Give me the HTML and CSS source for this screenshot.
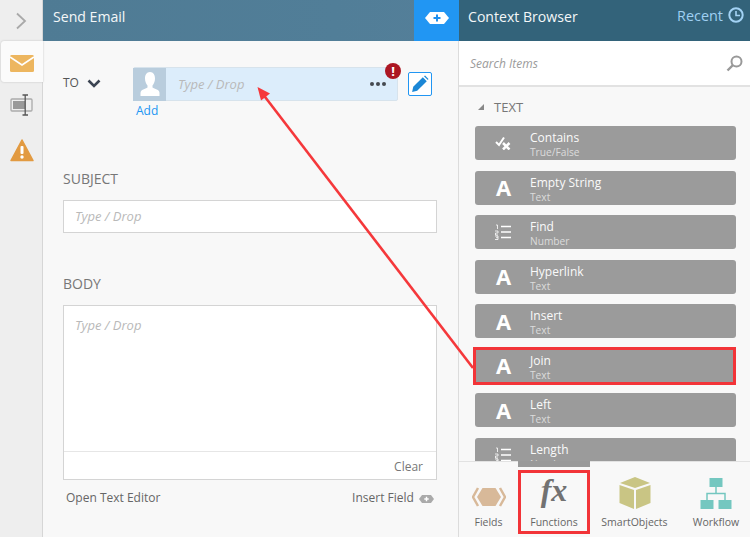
FILE: index.html
```html
<!DOCTYPE html>
<html>
<head>
<meta charset="utf-8">
<title>Send Email</title>
<link rel="stylesheet" href="styles.css">
</head>
<body>
<div class="app">
  <nav class="rail">
    <div class="rail-top"><svg width="12" height="18" viewBox="0 0 12 18"><path d="M2 1.500L10 9L2 16.500" fill="none" stroke="#a9a9a9" stroke-width="1.800"/></svg></div>
    <div class="rail-tab active"><svg width="24" height="17" viewBox="0 0 24 17"><rect width="24" height="17" rx="1.500" fill="#edb65f"/><path d="M0 2L12 10L24 2" fill="none" stroke="#fff" stroke-width="1.600"/></svg></div>
    <div class="rail-tab"><svg width="24" height="22" viewBox="0 0 24 22"><rect x="1" y="5" width="21" height="12" rx="1" fill="none" stroke="#aaa" stroke-width="1.300"/><rect x="3" y="7" width="12" height="8" fill="#999"/><path d="M12.500 1H18M12.500 21H18M15.200 1V21" stroke="#555" stroke-width="1.300" fill="none"/></svg></div>
    <div class="rail-tab"><svg width="24" height="23" viewBox="0 0 24 23"><path d="M12 1L23 21.500H1Z" fill="#e29a41" stroke="#e29a41" stroke-width="1.500" stroke-linejoin="round"/><rect x="10.500" y="7" width="3" height="8" rx="1" fill="#fff"/><circle cx="12" cy="18" r="1.700" fill="#fff"/></svg></div>
  </nav>

  <main class="main">
    <header class="main-head">
      <h1 class="title">Send Email</h1>
      <div class="add-btn"><svg width="24" height="12" viewBox="0 0 24 12"><path d="M5 0H19L24 6L19 12H5L0 6Z" fill="#fff"/><path d="M12 2.500V9.500M8.500 6H15.500" stroke="#1f8fee" stroke-width="2"/></svg></div>
    </header>
    <div class="form">
      <div class="to-row">
        <div class="to-label">TO <svg class="chev" width="14" height="9" viewBox="0 0 14 9"><path d="M1.500 1.500L7 7L12.500 1.500" fill="none" stroke="#3c4452" stroke-width="2.600"/></svg></div>
        <div class="to-field">
          <div class="token">
            <div class="avatar"><svg width="20" height="26" viewBox="0 0 20 26"><path d="M10 1C13.500 1 15 4 15 7.500C15 10.500 13.800 13 12.500 14.500V16.500C14.500 17.800 19.500 18.500 19.500 22V25H.500V22C.500 18.500 5.500 17.800 7.500 16.500V14.500C6.200 13 5 10.500 5 7.500C5 4 6.500 1 10 1Z" fill="#fff"/></svg></div>
            <span class="ph token-ph">Type / Drop</span>
            <span class="dots"><i></i><i></i><i></i></span>
            <span class="err">!</span>
          </div>
          <a class="add-link">Add</a>
        </div>
        <div class="edit"><svg width="18" height="18" viewBox="0 0 16 16"><path d="M1 15L2 10.500L10.500 2L14 5.500L5.500 14Z" fill="#1b87d6"/><path d="M11.500 1L12.500 .500L15.500 3.500L15 4.500Z" fill="#1b87d6"/></svg></div>
      </div>

      <h2 class="label subject-label">SUBJECT</h2>
      <div class="input"><span class="ph">Type / Drop</span></div>

      <h2 class="label body-label">BODY</h2>
      <div class="body-box">
        <div class="body-area"><span class="ph">Type / Drop</span></div>
        <div class="body-foot">Clear</div>
      </div>
      <div class="actions">
        <span>Open Text Editor</span>
        <span class="insert">Insert Field <svg width="15" height="8" viewBox="0 0 15 8"><path d="M3 0H12L15 4L12 8H3L0 4Z" fill="#aaa"/><path d="M7.500 1.800V6.200M5.300 4H9.700" stroke="#fff" stroke-width="1.400"/></svg></span>
      </div>
    </div>
  </main>

  <aside class="side">
    <header class="side-head">
      <h2 class="title">Context Browser</h2>
      <div class="recent">Recent <svg width="16" height="16" viewBox="0 0 16 16"><circle cx="8" cy="8" r="6.700" fill="none" stroke="#a3d3f5" stroke-width="2"/><path d="M8 4V8.500H12" fill="none" stroke="#a3d3f5" stroke-width="1.600"/></svg></div>
    </header>
    <div class="search"><span>Search Items</span><svg width="17" height="17" viewBox="0 0 17 17"><circle cx="10.500" cy="6.500" r="5" fill="none" stroke="#999" stroke-width="2"/><path d="M7 10L1.500 15.500" stroke="#999" stroke-width="2.400"/></svg></div>
    <div class="list">
      <div class="group"><i class="tri"></i>TEXT</div>
      <div class="items">
        <div class="item"><span class="ico"><svg width="16" height="14" viewBox="0 0 16 14"><path d="M1 6L4 9L9 1.500" fill="none" stroke="#fff" stroke-width="2"/><path d="M8 7L14.500 13.500M14.500 7L8 13.500" stroke="#fff" stroke-width="2.500"/></svg></span><div><b>Contains</b><small>True/False</small></div></div>
        <div class="item"><span class="ico a">A</span><div><b>Empty String</b><small>Text</small></div></div>
        <div class="item"><span class="ico"><svg width="16" height="16" viewBox="0 0 16 16"><path d="M6 2.500H16M6 8H16M6 13.500H16" stroke="#fff" stroke-width="1.700"/><path d="M1 1H2.500V5M0 7H3V9H0.500V11H3M0 12H3V15.500H0M1 13.700H3" stroke="#fff" stroke-width=".8" fill="none"/></svg></span><div><b>Find</b><small>Number</small></div></div>
        <div class="item"><span class="ico a">A</span><div><b>Hyperlink</b><small>Text</small></div></div>
        <div class="item"><span class="ico a">A</span><div><b>Insert</b><small>Text</small></div></div>
        <div class="item marked"><span class="ico a">A</span><div><b>Join</b><small>Text</small></div></div>
        <div class="item"><span class="ico a">A</span><div><b>Left</b><small>Text</small></div></div>
        <div class="item"><span class="ico"><svg width="16" height="16" viewBox="0 0 16 16"><path d="M6 2.500H16M6 8H16M6 13.500H16" stroke="#fff" stroke-width="1.700"/><path d="M1 1H2.500V5M0 7H3V9H0.500V11H3M0 12H3V15.500H0M1 13.700H3" stroke="#fff" stroke-width=".8" fill="none"/></svg></span><div><b>Length</b><small>Number</small></div></div>
      </div>
    </div>
    <div class="tabs">
      <div class="tab-grip"></div>
      <div class="tab"><svg width="34" height="20" viewBox="0 0 34 20"><path d="M10.500 1H23.500L29 10L23.500 19H10.500L5 10Z" fill="#d8b999"/><path d="M6 1L1 10L6 19M28 1L33 10L28 19" fill="none" stroke="#d8b999" stroke-width="2.500"/></svg><span>Fields</span></div>
      <div class="tab selected"><span class="fx">fx</span><span>Functions</span></div>
      <div class="tab"><svg width="32" height="34" viewBox="0 0 32 34"><path d="M16 1L31 7L16 12L1 7Z" fill="#c9c584"/><path d="M0.500 9L15 14V33L0.500 27Z" fill="#c9c584"/><path d="M31.500 9L17 14V33L31.500 27Z" fill="#c9c584"/></svg><span>SmartObjects</span></div>
      <div class="tab"><svg width="32" height="31" viewBox="0 0 32 31"><rect x="9.500" y="0" width="13" height="9" fill="#74c7c0"/><rect x="0.500" y="22" width="13" height="9" fill="#74c7c0"/><rect x="18.500" y="22" width="13" height="9" fill="#74c7c0"/><path d="M16 9V16M7 22V15.500H25V22" fill="none" stroke="#74c7c0" stroke-width="1.500"/></svg><span>Workflow</span></div>
    </div>
  </aside>

  <svg class="arrow" width="750" height="537" viewBox="0 0 750 537"><path d="M473 368L262 93" stroke="#f5383b" stroke-width="2.600" fill="none"/><path d="M257.500 87L270 93.500L261 100.500Z" fill="#f5383b"/></svg>
</div>
</body>
</html>
```
FILE: styles.css
```css
* { box-sizing: border-box; }
html, body { margin: 0; padding: 0; }
body { font-family: "Open Sans", sans-serif; color: #666; overflow: hidden; }
h1, h2 { margin: 0; font-weight: 400; }
.app { position: relative; display: grid; grid-template-columns: 43px 416px 291px; width: 750px; height: 537px; overflow: hidden; }

.rail { background: #eeeeee; border-right: 1px solid #d6d6d6; }
.rail-top { height: 41px; display: flex; align-items: center; justify-content: center; padding-right: 1px; }
.rail-tab { height: 41px; display: flex; align-items: center; justify-content: center; margin-left: 1px; }
.rail-tab.active { background: #fbfbfb; width: 42px; border-radius: 3px 0 0 3px; box-shadow: 0 0 2px #bbb; position: relative; z-index: 1; padding-top: 4px; }
.rail-tab:nth-child(3) { height: 45px; padding-top: 1px; }
.rail-tab:nth-child(4) { height: 37px; padding-top: 9px; }

.main { display: flex; flex-direction: column; background: #f8f8f8; }
.main-head { height: 41px; flex: none; display: flex; align-items: stretch; justify-content: space-between; background: linear-gradient(90deg, #4f7b94, #517e98 70%, #557f99); padding-left: 10px; }
.title { color: #f4f7f8; font-size: 14.100px; line-height: 33px; }
.add-btn { width: 45px; background: #2196f3; display: flex; align-items: center; justify-content: center; padding-bottom: 6px; }

.form { flex: 1; padding: 26px 21px 0 20px; border-right: 1px solid #dcdcdc; }
.to-row { display: flex; align-items: flex-start; height: 89px; }
.to-label { width: 70px; font-size: 12px; color: #555; padding-top: 7px; line-height: 17px; }
.chev { margin-left: 5px; vertical-align: -1px; }
.to-field { width: 265px; flex: none; }
.token { position: relative; height: 34px; display: flex; align-items: center; background: #dcedfb; border: 1px solid #d7e3ec; border-radius: 2px; }
.avatar { width: 33px; height: 33px; margin-left: -1px; background: #b9cddd; display: flex; align-items: center; justify-content: center; }
.ph { font-style: italic; font-size: 13px; color: #b9b9b9; }
.token-ph { margin-left: 12px; flex: 1; }
.dots { display: flex; gap: 1.500px; margin-right: 11px; }
.dots i { width: 4.500px; height: 4.500px; border-radius: 50%; background: #45494f; }
.err { position: absolute; right: -4px; top: -5px; width: 16px; height: 16px; border-radius: 50%; background: #ac1723; color: #fff; font-weight: 700; font-size: 13px; line-height: 16px; text-align: center; }
.add-link { display: block; color: #2196f3; font-size: 12px; line-height: 18px; margin: 1px 0 0 3px; }
.edit { width: 24px; height: 24px; margin: 5px 0 0 10px; border: 1px solid #2196f3; border-radius: 2px; background: #fff; display: flex; align-items: center; justify-content: center; }

.label { font-size: 14px; color: #777; line-height: 20px; }
.subject-label { margin-top: 13px; }
.input { margin-top: 11px; height: 33px; background: #fff; border: 1px solid #d4d4d4; padding: 0 11px; line-height: 29px; }
.body-label { margin-top: 41px; }
.body-box { margin-top: 11px; height: 175px; background: #fff; border: 1px solid #d4d4d4; display: flex; flex-direction: column; }
.body-area { flex: 1; padding: 9px 11px; line-height: 18px; }
.body-foot { height: 28px; border-top: 1px solid #e6e6e6; text-align: right; font-size: 12px; line-height: 30px; padding-right: 13px; color: #777; }
.actions { display: flex; justify-content: space-between; padding: 9px 3px 0; font-size: 12px; line-height: 17px; color: #666; }
.insert svg { margin-left: 2px; vertical-align: -1px; }
.insert { padding-right: 0; margin-right: 0; }

.side { display: flex; flex-direction: column; background: #f8f8f8; min-height: 0; }
.side-head { height: 41px; flex: none; background: #33637a; display: flex; justify-content: space-between; padding: 0 6px 0 9px; }
.recent { color: #9fd0f2; font-size: 14.400px; line-height: 31px; display: flex; align-items: flex-start; gap: 5px; }
.recent svg { margin-top: 7px; }
.search { height: 46px; flex: none; background: #fff; border-bottom: 2px solid #e2e2e2; display: flex; align-items: center; justify-content: space-between; padding: 0 7px 0 11px; font-style: italic; font-size: 12px; color: #9b9b9b; }
.list { flex: 1; min-height: 0; overflow: hidden; padding: 10px 14px 0 16px; }
.group { display: flex; align-items: center; font-size: 13px; color: #777; height: 20px; margin-bottom: 9px; padding-left: 3px; }
.tri { width: 0; height: 0; margin-right: 10px; border-style: solid; border-width: 0 0 6px 6px; border-color: transparent transparent #888 transparent; }
.items { display: flex; flex-direction: column; gap: 10.500px; }
.item { position: relative; flex: none; height: 34px; background: #9b9b9b; border-radius: 3px; display: flex; align-items: flex-start; color: #fff; }
.item.marked { width: 259px; outline: 3px solid #f23438; outline-offset: -1px; border-radius: 0; }
.ico { width: 55px; height: 34px; flex: none; display: flex; align-items: center; justify-content: center; }
.ico.a { font-size: 22px; font-weight: 700; line-height: 34px; padding-left: 2px; padding-bottom: 1px; }
.item b { display: block; font-weight: 400; font-size: 12px; line-height: 14px; margin-top: 5px; color: #fafafa; }
.item small { display: block; font-size: 10.200px; line-height: 15px; color: #dcdcdc; }

.tabs { position: relative; height: 76px; flex: none; display: flex; background: #f8f8f8; border-top: 1px solid #e2e2e2; padding: 8px 0 0 0; font-size: 10.500px; color: #666; }
.tab-grip { position: absolute; left: 59px; top: -1px; width: 72px; height: 6px; background: #999; }
.tab { flex: none; display: flex; flex-direction: column; align-items: center; justify-content: flex-end; height: 64px; padding-bottom: 5px; gap: 5px; }
.tab:nth-child(2) { width: 59px; gap: 8px; }
.tab.selected { width: 72px; border: 3px solid #f23438; padding-bottom: 2px; gap: 7px; }
.tab:nth-child(4) { width: 89px; }
.tab:nth-child(5) { width: 74px; gap: 6px; }
.fx { font-family: "Liberation Serif", serif; font-style: italic; font-weight: 700; font-size: 32px; line-height: 36px; color: #727272; }

.arrow { position: absolute; left: 0; top: 0; pointer-events: none; }
```
